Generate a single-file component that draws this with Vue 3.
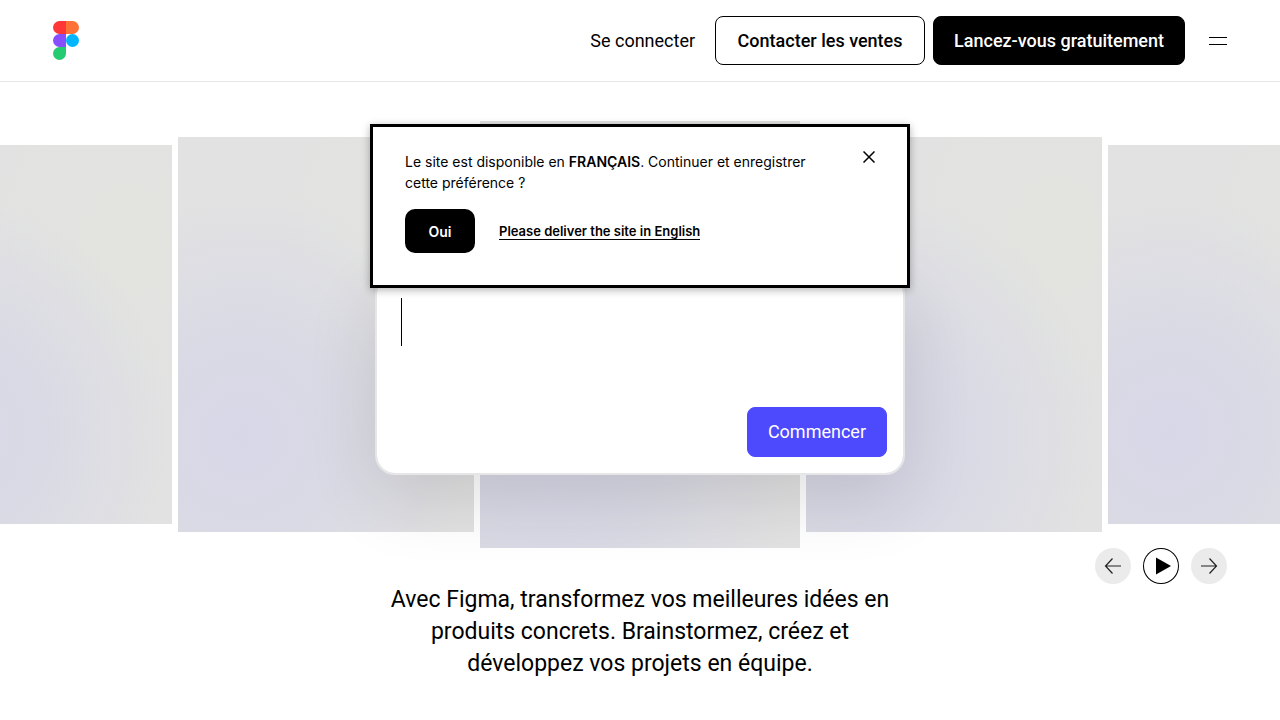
<script setup>
import { ref } from 'vue'

const cards = ['outer', 'inner', 'centre', 'inner', 'outer']
const idea = ref('')
</script>

<template>
  <div class="page">
    <header class="header">
      <a href="#" class="logo" aria-label="Figma">
        <svg viewBox="0 0 26 39" width="26" height="39" aria-hidden="true">
          <path fill="#ff3737" d="M13 0H6.500a6.500 6.500 0 0 0 0 13H13z" />
          <path fill="#ff7237" d="M13 0h6.500a6.500 6.500 0 0 1 0 13H13z" />
          <path fill="#874fff" d="M13 13H6.500a6.500 6.500 0 0 0 0 13H13z" />
          <circle fill="#00b6ff" cx="19.500" cy="19.500" r="6.500" />
          <path fill="#24cb71" d="M13 26H6.500A6.500 6.500 0 1 0 13 32.500z" />
        </svg>
      </a>
      <nav class="nav">
        <a href="#" class="login">Se connecter</a>
        <button type="button" class="btn outline">Contacter les ventes</button>
        <button type="button" class="btn solid">Lancez-vous gratuitement</button>
        <button type="button" class="menu" aria-label="Menu"><span></span><span></span></button>
      </nav>
    </header>

    <main>
      <section class="hero">
        <div class="carousel">
          <div v-for="(kind, i) in cards" :key="i" class="card" :class="kind"></div>
        </div>
        <form class="prompt" @submit.prevent>
          <div class="entry">
            <span class="caret"></span>
            <textarea v-model="idea" aria-label="Votre idée"></textarea>
          </div>
          <button type="submit" class="btn start">Commencer</button>
        </form>
      </section>

      <div class="controls">
        <button type="button" class="round" aria-label="Précédent">
          <svg viewBox="0 0 36 36" width="36" height="36"><path d="M26 18H10.500M17.500 10.500L10.500 18l7 7.500" fill="none" stroke="#222" stroke-width="1.200" /></svg>
        </button>
        <button type="button" class="round play" aria-label="Lecture">
          <svg viewBox="0 0 36 36" width="36" height="36"><path d="M13 9.500v17L28 18z" fill="#000" /></svg>
        </button>
        <button type="button" class="round" aria-label="Suivant">
          <svg viewBox="0 0 36 36" width="36" height="36"><path d="M10 18h15.500M18.500 10.500l7 7.500-7 7.500" fill="none" stroke="#222" stroke-width="1.200" /></svg>
        </button>
      </div>

      <p class="intro">Avec Figma, transformez vos meilleures idées en produits concrets. Brainstormez, créez et développez vos projets en équipe.</p>
    </main>

    <div class="dialog" role="dialog" aria-label="Langue du site">
      <div class="message">
        <p>Le site est disponible en <strong>FRANÇAIS</strong>. Continuer et enregistrer cette préférence ?</p>
        <button type="button" class="close" aria-label="Fermer">
          <svg viewBox="0 0 12 12" width="12" height="12"><path d="M.5.5l11 11M11.500.5l-11 11" stroke="#000" stroke-width="1.500" /></svg>
        </button>
      </div>
      <div class="choices">
        <button type="button" class="yes">Oui</button>
        <a href="#" class="english">Please deliver the site in English</a>
      </div>
    </div>
  </div>
</template>

<style>
body {
  margin: 0;
  background: #fff;
}
</style>

<style scoped>
.page {
  position: relative;
  min-height: 100vh;
  overflow: hidden;
  font-family: Roboto, "Liberation Sans", sans-serif;
  color: #000;
}
button {
  font: inherit;
  color: inherit;
  padding: 0;
  border: 0;
  background: none;
}
a {
  color: inherit;
  text-decoration: none;
}
.header {
  display: flex;
  align-items: center;
  justify-content: space-between;
  padding: 16px 53px;
  border-bottom: 1px solid #e6e6e6;
}
.logo svg {
  display: block;
}
.nav {
  display: flex;
  align-items: center;
  gap: 8px;
  font-size: 18px;
}
.login {
  margin-right: 12px;
}
.btn {
  height: 49px;
  padding: 0 20px;
  border: 1px solid #000;
  border-radius: 8px;
  font-size: 18px;
  font-weight: 500;
}
.outline {
  min-width: 210px;
}
.solid {
  background: #000;
  color: #fff;
}
.menu {
  display: flex;
  flex-direction: column;
  gap: 6px;
  width: 18px;
  margin-left: 16px;
}
.menu span {
  height: 1px;
  background: #000;
}
.hero {
  display: grid;
  grid-template-columns: minmax(0, 1fr);
  justify-items: center;
  padding-top: 39px;
}
.carousel,
.prompt {
  grid-area: 1 / 1;
}
.carousel {
  display: flex;
  align-items: center;
  justify-content: center;
  gap: 6px;
  width: 100%;
}
.card {
  flex: none;
  aspect-ratio: 3 / 4;
  background:
    radial-gradient(ellipse 78% 62% at 22% 76%, #d7d7e8 0%, #dadae5 45%, rgba(222, 222, 228, 0) 100%),
    radial-gradient(ellipse 50% 45% at 85% 25%, #e3e4df 0%, rgba(226, 227, 223, 0) 100%),
    #e2e2e2;
}
.centre {
  width: 320px;
}
.inner {
  width: 296px;
}
.outer {
  width: 284px;
}
.prompt {
  position: relative;
  align-self: end;
  display: flex;
  flex-direction: column;
  align-items: flex-end;
  justify-content: space-between;
  box-sizing: border-box;
  width: min(530px, 90%);
  min-height: 202px;
  margin-bottom: 73px;
  padding: 23px 16px 16px 24px;
  border: 2px solid #e6e6e8;
  border-radius: 20px;
  background: #fff;
  background-clip: padding-box;
  box-shadow: 0 24px 70px rgba(0, 0, 0, 0.12);
}
.entry {
  display: flex;
  width: 100%;
}
.caret {
  width: 1px;
  background: #000;
}
textarea {
  flex: 1;
  height: 48px;
  padding: 0;
  border: 0;
  outline: 0;
  resize: none;
  background: none;
  font: 18px/24px Roboto, sans-serif;
}
.start {
  height: 50px;
  border-color: #4d49fc;
  background: #4d49fc;
  color: #fff;
  font-weight: 400;
}
.controls {
  display: flex;
  justify-content: flex-end;
  gap: 12px;
  padding-right: 53px;
}
.round {
  width: 36px;
  height: 36px;
  border-radius: 50%;
  background: #ebebeb;
}
.round svg {
  display: block;
}
.play {
  background: #fff;
  box-shadow: inset 0 0 0 1px #000;
}
.intro {
  max-width: 520px;
  margin: 0 auto;
  font-size: 23px;
  line-height: 32px;
  text-align: center;
}
.dialog {
  position: absolute;
  top: 124px;
  right: 0;
  left: 0;
  box-sizing: border-box;
  width: min(540px, 100%);
  margin: 0 auto;
  padding: 24px 32px 32px;
  border: 3px solid #000;
  background: #fff;
  box-shadow: 0 2px 8px rgba(0, 0, 0, 0.3);
  font-family: Inter, "Liberation Sans", sans-serif;
  font-size: 14px;
}
.message {
  display: flex;
  align-items: flex-start;
  justify-content: space-between;
}
.message p {
  max-width: 425px;
  margin: 0;
  line-height: 21px;
}
.message strong {
  font-weight: 600;
}
.close svg {
  display: block;
}
.choices {
  display: flex;
  align-items: center;
  gap: 24px;
  margin-top: 16px;
}
.yes {
  width: 70px;
  height: 44px;
  border-radius: 10px;
  background: #000;
  color: #fff;
  font-weight: 600;
}
.english {
  border-bottom: 1px solid #000;
  font-size: 13px;
  font-weight: 600;
}
</style>
